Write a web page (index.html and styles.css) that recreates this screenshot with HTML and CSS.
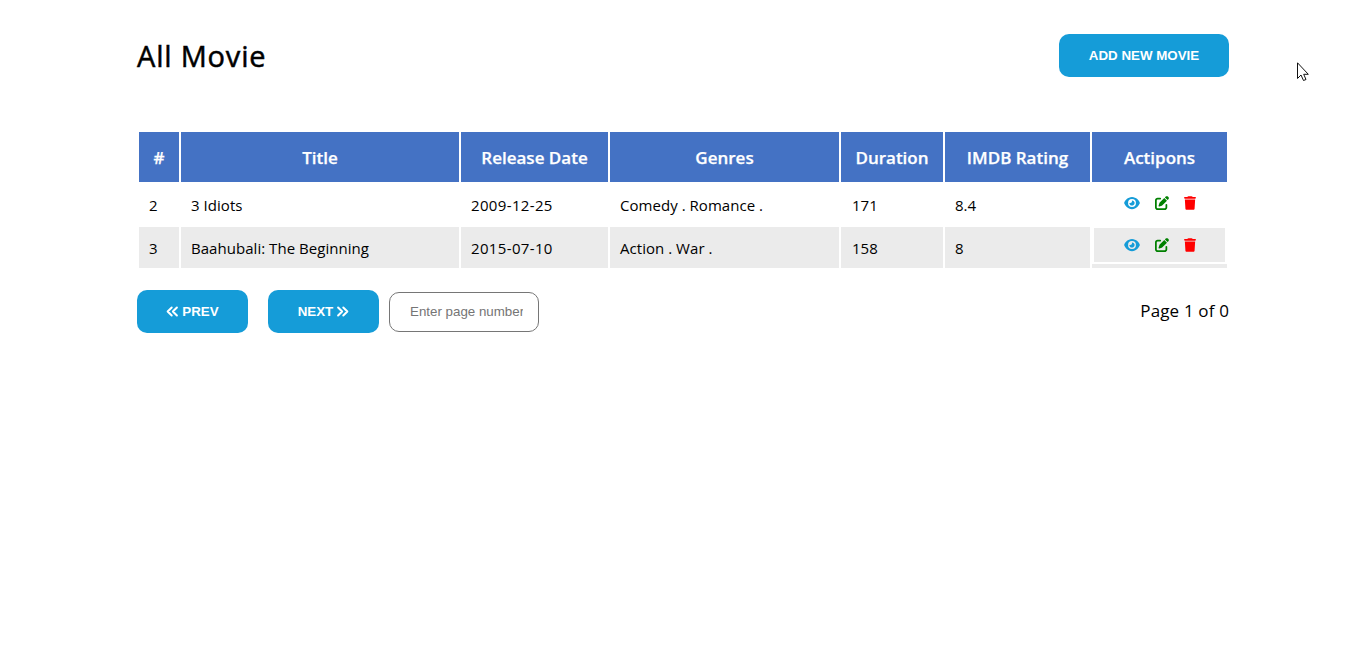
FILE: index.html
```
<!DOCTYPE html>
<html lang="en">
<head>
<meta charset="utf-8">
<title>All Movie</title>
<link rel="stylesheet" href="styles.css">
</head>
<body>
<svg class="sprite" aria-hidden="true">
  <symbol id="eye" viewBox="0 0 576 512"><path d="M288 32c-80.800 0-145.500 36.800-192.600 80.600C48.600 156 17.300 208 2.500 243.700c-3.300 7.900-3.300 16.700 0 24.600C17.300 304 48.600 356 95.400 399.400C142.500 443.200 207.200 480 288 480s145.500-36.800 192.600-80.600c46.800-43.500 78.100-95.400 93-131.100c3.300-7.900 3.300-16.700 0-24.600c-14.900-35.700-46.200-87.700-93-131.100C433.500 68.800 368.800 32 288 32zM144 256a144 144 0 1 1 288 0a144 144 0 1 1-288 0zm144-64c0 35.300-28.700 64-64 64c-7.100 0-13.900-1.200-20.300-3.300c-5.500-1.800-11.900 1.600-11.700 7.400c.3 6.900 1.300 13.800 3.200 20.700c13.700 51.200 66.400 81.600 117.600 67.900s81.600-66.400 67.900-117.600c-11.100-41.500-47.800-69.400-88.600-71.100c-5.800-.2-9.200 6.100-7.400 11.700c2.100 6.400 3.300 13.200 3.300 20.300z"/></symbol>
  <symbol id="edit" viewBox="0 0 512 512"><path d="M471.600 21.700c-21.900-21.900-57.300-21.900-79.200 0L362.300 51.700l97.900 97.900l30.100-30.100c21.900-21.900 21.900-57.300 0-79.200L471.600 21.700zM172.400 241.700c-6.100 6.100-10.800 13.600-13.500 21.900l-29.600 88.800c-2.900 8.600-.6 18.100 5.800 24.600s15.900 8.700 24.600 5.800l88.800-29.600c8.200-2.700 15.700-7.400 21.900-13.500L437.700 172.300L339.700 74.300L172.400 241.700zM96 64C43 64 0 107 0 160V416c0 53 43 96 96 96H352c53 0 96-43 96-96V320c0-17.700-14.300-32-32-32s-32 14.300-32 32v96c0 17.700-14.300 32-32 32H96c-17.700 0-32-14.300-32-32V160c0-17.700 14.300-32 32-32h96c17.700 0 32-14.300 32-32s-14.300-32-32-32H96z"/></symbol>
  <symbol id="trash" viewBox="0 0 448 512"><path d="M135.200 17.700L128 32H32C14.300 32 0 46.300 0 64S14.300 96 32 96H416c17.700 0 32-14.300 32-32s-14.300-32-32-32H320l-7.200-14.300C307.400 6.800 296.300 0 284.200 0H163.800c-12.100 0-23.200 6.800-28.600 17.700zM416 128H32L53.200 467c1.600 25.300 22.600 45 47.900 45H346.900c25.300 0 46.300-19.700 47.900-45L416 128z"/></symbol>
  <symbol id="angles-left" viewBox="0 0 512 512"><path d="M225 96L65 256L225 416M430 96L270 256L430 416" class="angle-line"/></symbol>
</svg>
<main class="container">
  <header class="top">
    <h1 class="heading">All Movie</h1>
    <button class="btn btn-add">ADD NEW MOVIE</button>
  </header>
  <section class="table">
    <div class="th">#</div>
    <div class="th">Title</div>
    <div class="th">Release Date</div>
    <div class="th">Genres</div>
    <div class="th">Duration</div>
    <div class="th">IMDB Rating</div>
    <div class="th">Actipons</div>

    <div class="td">2</div>
    <div class="td">3 Idiots</div>
    <div class="td num">2009-12-25</div>
    <div class="td">Comedy . Romance .</div>
    <div class="td dur">171</div>
    <div class="td">8.4</div>
    <div class="td-actions"><div class="actions first">
      <svg class="icon eye"><use href="#eye"/></svg><svg class="icon edit"><use href="#edit"/></svg><svg class="icon trash"><use href="#trash"/></svg>
    </div></div>

    <div class="td alt">3</div>
    <div class="td alt">Baahubali: The Beginning</div>
    <div class="td alt num">2015-07-10</div>
    <div class="td alt">Action . War .</div>
    <div class="td alt dur">158</div>
    <div class="td alt">8</div>
    <div class="td-actions alt"><div class="actions">
      <svg class="icon eye"><use href="#eye"/></svg><svg class="icon edit"><use href="#edit"/></svg><svg class="icon trash"><use href="#trash"/></svg>
    </div></div>
  </section>
  <footer class="pager">
    <button class="btn btn-page"><svg class="chev"><use href="#angles-left"/></svg>PREV</button>
    <button class="btn btn-page next">NEXT<svg class="chev flip"><use href="#angles-left"/></svg></button>
    <input class="page-input" type="text" placeholder="Enter page number">
    <span class="page-info">Page 1 of 0</span>
  </footer>
</main>
<svg class="cursor" viewBox="0 0 12 20"><path d="M.5 .8V16.500L4 13L6.500 18.500L9 17.500L6.700 12.300H11.300Z"/></svg>
</body>
</html>
```

FILE: styles.css
```
* { box-sizing: border-box; }
body {
  margin: 0;
  background: #fff;
  color: #000;
  font-family: "Segoe UI", "Open Sans", "Noto Sans", sans-serif;
}
.sprite { position: absolute; width: 0; height: 0; }
.container { width: 1092px; margin: 0 auto; padding-top: 34px; }
.top { display: flex; justify-content: space-between; height: 98px; }
.heading {
  margin: 2px 0 0;
  font-size: 29px;
  line-height: 40px;
  font-weight: 500;
  letter-spacing: .8px;
  -webkit-text-stroke: .5px #000;
}
.btn {
  display: flex;
  align-items: center;
  justify-content: center;
  height: 43px;
  padding: 0;
  border: 0;
  border-radius: 10px;
  background: #159cd8;
  color: #fff;
  font: bold 13.333px "Liberation Sans", Arial, sans-serif;
}
.btn-add { width: 170px; }
.table {
  display: grid;
  grid-template-columns: 40px 278px 147px 229px 102px 145px 135px;
  grid-template-rows: 50px 41px 41px;
  gap: 2px;
  margin: 0 2px;
}
.th {
  display: flex;
  align-items: center;
  justify-content: center;
  background: #4472c4;
  color: #fff;
  font-size: 17px;
  font-weight: 600;
  white-space: nowrap;
  -webkit-text-stroke: .25px #fff;
}
.td { padding: 0 10px; font-size: 15px; line-height: 42px; letter-spacing: .04px; white-space: nowrap; }
.num { letter-spacing: .35px; }
.dur { padding-left: 11px; }
.alt { background: #ebebeb; }
.actions {
  display: flex;
  align-items: center;
  justify-content: center;
  height: 37px;
  border: solid #fff;
  border-width: 1px 2px 2px;
}
.first { height: 39px; }
.icon { height: 14px; }
.eye { width: 16px; fill: #159cd8; margin-right: 15px; }
.edit { width: 14px; fill: #008000; margin-right: 15px; }
.trash { width: 12px; fill: #f00; }
.pager { display: flex; align-items: center; margin-top: 22px; }
.btn-page { width: 111px; gap: 3px; }
.next { margin: 0 10px 0 20px; }
.chev { width: 13px; height: 13px; }
.flip { transform: scaleX(-1); }
.angle-line { fill: none; stroke: #fff; stroke-width: 78; stroke-linecap: round; stroke-linejoin: round; }
.page-input {
  width: 150px;
  height: 40px;
  padding: 0 15px 0 20px;
  border: 1px solid #767676;
  border-radius: 10px;
  font: 13.333px "Liberation Sans", Arial, sans-serif;
}
.page-input::placeholder { color: #757575; }
.page-info { margin-left: auto; padding-bottom: 2px; font-size: 17px; letter-spacing: .15px; }
.cursor { position: absolute; left: 1297px; top: 62px; width: 12px; height: 20px; fill: #fff; stroke: #111; stroke-width: 1; }
```
